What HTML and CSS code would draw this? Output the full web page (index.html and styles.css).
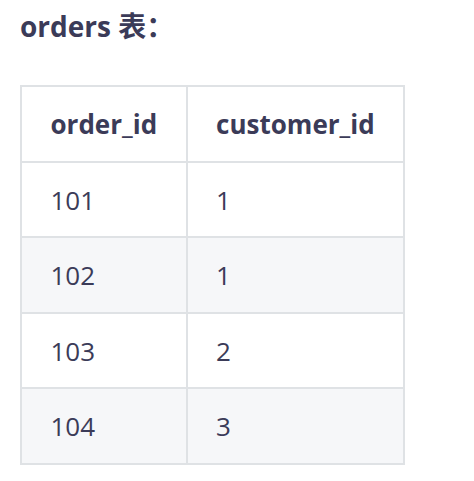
FILE: index.html
```html
<!DOCTYPE html>
<html lang="zh">
<head>
<meta charset="utf-8">
<link rel="stylesheet" href="styles.css">
</head>
<body>
<h3 class="title">orders 表：</h3>
<table class="tbl">
  <thead>
    <tr><th>order_id</th><th>customer_id</th></tr>
  </thead>
  <tbody>
    <tr><td>101</td><td>1</td></tr>
    <tr class="alt"><td>102</td><td>1</td></tr>
    <tr><td>103</td><td>2</td></tr>
    <tr class="alt"><td>104</td><td>3</td></tr>
  </tbody>
</table>
</body>
</html>
```
FILE: styles.css
```css
html, body {
  margin: 0;
  padding: 0;
  background: #ffffff;
}
body {
  padding: 6px 20px;
  font-family: "Open Sans", "Noto Sans CJK SC", sans-serif;
  color: #3b3b58;
}
.title {
  margin: 0 0 39px 0;
  font-size: 28px;
  font-weight: 700;
  line-height: 40px;
}
.tbl {
  border-collapse: collapse;
  font-size: 26px;
}
.tbl th, .tbl td {
  border: 2px solid #dfe2e5;
  padding: 19px 28.5px 18.6px;
  line-height: 36px;
  text-align: left;
}
.tbl th {
  font-weight: 700;
}
.tbl .alt td {
  background: #f6f7f9;
}
```
